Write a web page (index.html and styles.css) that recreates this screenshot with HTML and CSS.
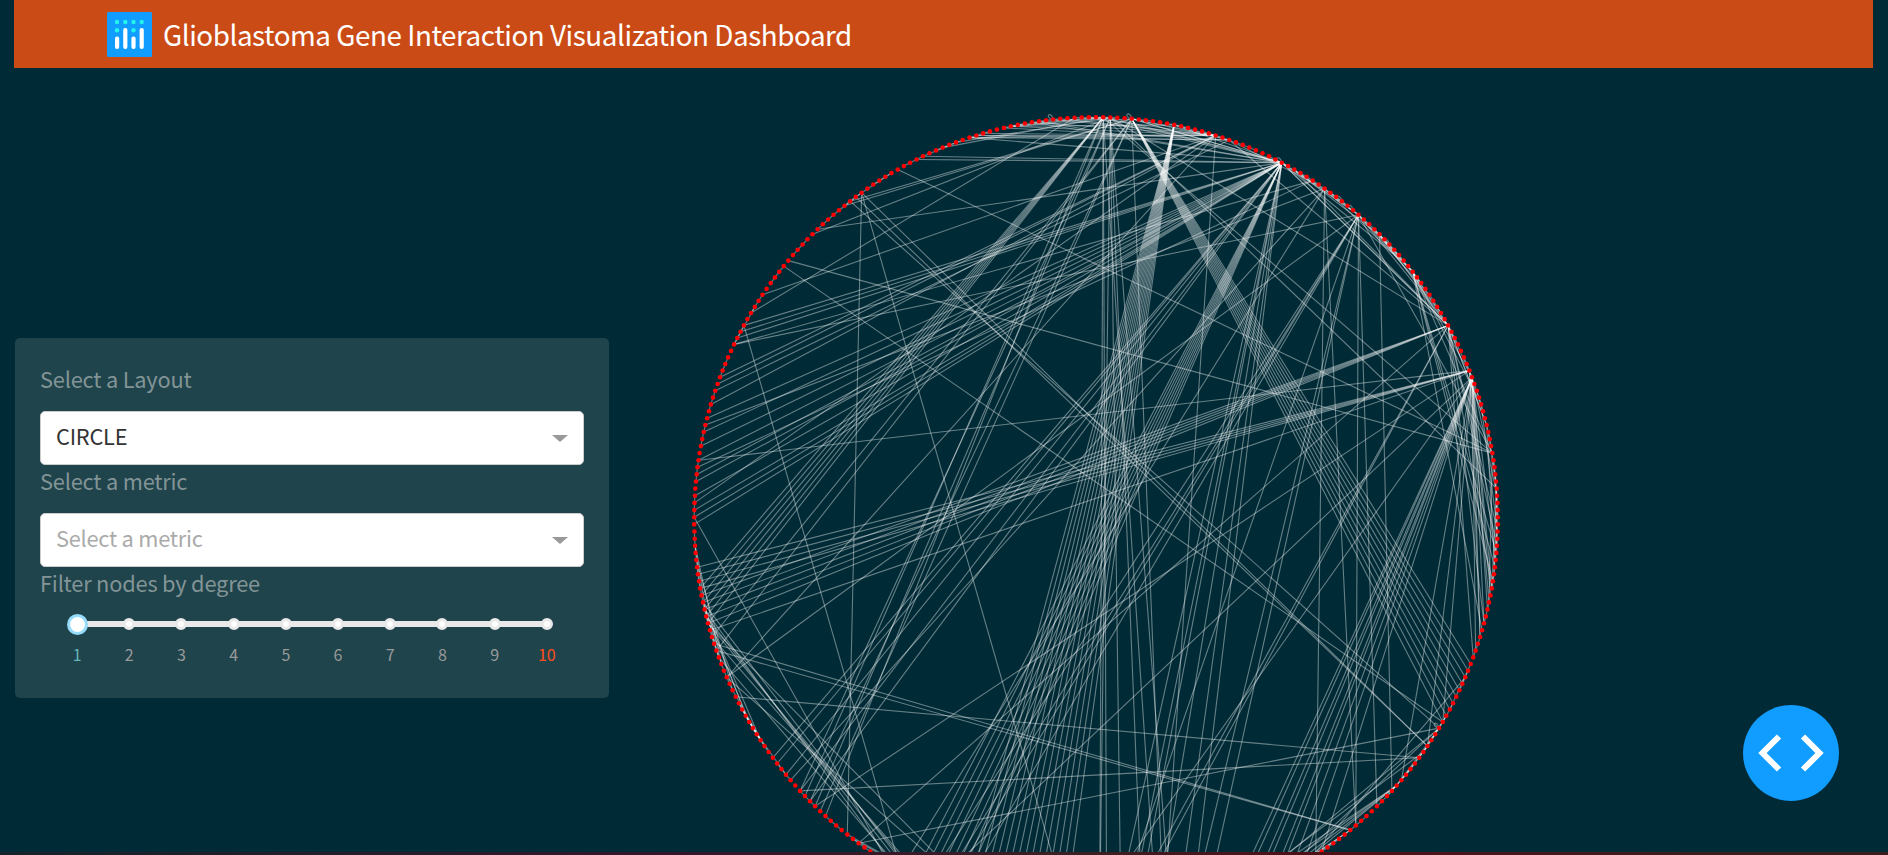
FILE: index.html
```html
<!DOCTYPE html>
<html lang="en">
<head>
<meta charset="utf-8">
<title>Glioblastoma Gene Interaction Visualization Dashboard</title>
<link rel="stylesheet" href="styles.css">
</head>
<body>
<div class="page">
  <header class="navbar">
    <svg class="logo" viewBox="0 0 45 45">
      <rect width="45" height="45" rx="1.5" fill="#119dff"/>
      <g fill="#25f4ee"><circle cx="10" cy="10" r="2.2"/><circle cx="18.3" cy="10" r="2.2"/><circle cx="26.5" cy="10" r="2.2"/><circle cx="34.7" cy="10" r="2.2"/><circle cx="10" cy="18.3" r="2.2"/><circle cx="26.5" cy="18.3" r="2.2"/></g>
      <g fill="#fff"><rect x="8" y="24.5" width="4.2" height="12.5" rx="2"/><rect x="16.2" y="16" width="4.2" height="21" rx="2"/><rect x="24.4" y="24.5" width="4.2" height="12.5" rx="2"/><rect x="32.6" y="16" width="4.2" height="21" rx="2"/></g>
    </svg>
    <h1 class="title">Glioblastoma Gene Interaction Visualization Dashboard</h1>
  </header>
  <main class="content">
    <section class="controls">
      <label class="label">Select a Layout</label>
      <div class="select"><span class="value">CIRCLE</span><i class="arrow"></i></div>
      <label class="label">Select a metric</label>
      <div class="select"><span class="placeholder">Select a metric</span><i class="arrow"></i></div>
      <label class="label label-slider">Filter nodes by degree</label>
      <div class="slider">
        <div class="step active"><i class="dot"></i><span>1</span></div>
        <div class="step"><i class="dot"></i><span>2</span></div>
        <div class="step"><i class="dot"></i><span>3</span></div>
        <div class="step"><i class="dot"></i><span>4</span></div>
        <div class="step"><i class="dot"></i><span>5</span></div>
        <div class="step"><i class="dot"></i><span>6</span></div>
        <div class="step"><i class="dot"></i><span>7</span></div>
        <div class="step"><i class="dot"></i><span>8</span></div>
        <div class="step"><i class="dot"></i><span>9</span></div>
        <div class="step last"><i class="dot"></i><span>10</span></div>
      </div>
    </section>
    <svg class="network" id="network" viewBox="640 68 1234 784"></svg>
  </main>
  <footer class="edge-strip"></footer>
  <button class="code-button" aria-label="Callback graph">
    <svg viewBox="0 0 96 96"><path d="M36 31.5 19.5 48 36 64.5M60 31.5 76.5 48 60 64.5" fill="none" stroke="#fff" stroke-width="6"/></svg>
  </button>
</div>
<script src="graph.js"></script>
</body>
</html>
```
FILE: styles.css
```css
* { box-sizing: border-box; }
body { margin: 0; background: #002b36; font-family: "Noto Sans CJK SC", "Noto Sans", sans-serif; color: #839496; }
.page { height: 855px; display: flex; flex-direction: column; overflow: hidden; }
.navbar { flex: 0 0 68px; margin: 0 15px 0 14px; padding: 0 0 0 93px; background: #cb4b16; display: flex; align-items: center; }
.logo { width: 45px; height: 45px; margin-right: 11px; }
.title { margin: 0; padding-bottom: 1px; font-size: 27.8px; letter-spacing: -0.45px; font-weight: 400; line-height: 40px; color: #fff; white-space: nowrap; }
.content { flex: 1; min-height: 0; display: flex; padding-left: 15px; }
.controls { flex: 0 0 594px; height: 360px; margin-top: 270px; padding: 25px; border-radius: 5px; background: #1f444c; display: flex; flex-direction: column; }
.label { height: 36px; margin-bottom: 12px; font-size: 21.8px; letter-spacing: -0.2px; line-height: 32px; white-space: nowrap; }
.label-slider { margin-bottom: 0; }
.select { flex: 0 0 54px; padding: 0 15px; border: 1px solid #ccc; border-radius: 5px; background: #fff; display: flex; align-items: center; justify-content: space-between; font-size: 21.8px; letter-spacing: -0.25px; line-height: 48px; }
.value, .placeholder { padding-bottom: 4px; }
.value { color: #333; }
.placeholder { color: #aaa; }
.arrow { width: 0; height: 0; border: 8px solid transparent; border-top: 7px solid #999; border-bottom: 0; }
.slider { margin: 9px 11px 0; display: flex; background: linear-gradient(#e9e9e9, #e9e9e9) 26px 9px / 470px 6px no-repeat; }
.step { flex: 0 0 52.2px; display: flex; flex-direction: column; align-items: center; font-size: 16px; line-height: 22px; color: #999; }
.dot { width: 12px; height: 12px; margin: 6px 0 13px; border: 3px solid #e9e9e9; border-radius: 50%; background: #fff; }
.active .dot { width: 21px; height: 21px; margin: 2px 0 8px; border-color: #96dbfa; }
.active { color: #66b5bd; }
.last { color: #ff4d1c; }
.network { width: 1234px; height: 784px; margin-left: 31px; }
.edges { fill: none; stroke: #fff; stroke-opacity: .4; stroke-width: 1.1; }
.nodes { fill: #f00; }
.edge-strip { flex: 0 0 3px; background: linear-gradient(90deg, #16232c, #35142c 35%, #3b2024 57%, #511018 70%, #3b1d1d 90%); }
.code-button { position: absolute; left: 1743px; top: 705px; width: 96px; height: 96px; padding: 0; border: 0; border-radius: 50%; background: #119dff; }
.code-button svg { display: block; width: 96px; height: 96px; }
```
FILE: graph.js
```js
const COUNT = 353, CX = 1096, CY = 519, R = 401.8;
const at = i => {
  const a = i * 2 * Math.PI / COUNT;
  return [CX + R * Math.sin(a), CY - R * Math.cos(a)];
};
const range = (a, b) => Array.from({ length: b - a + 1 }, (_, k) => a + k);

// Each entry: source node and the nodes it interacts with.
const links = [
  [11, range(181, 195)],
  [5, range(109, 118)],
  [27, range(196, 203)],
  [27, [221, 223, 226, 228, 229]],
  [27, [264, 265, 266, 268, 270, 271, 273, 275, 277, 279]],
  [27, [291, 292, 293, 310, 327, 328, 335]],
  [27, [163, 165, 168, 171, 172, 174]],
  [27, [60, 60, 50, 40, 36, 352, 345, 1, 2, 5]],
  [1, range(250, 255)],
  [1, [176, 175, 218, 222, 168, 79, 342]],
  [2, [176, 173, 170, 166, 220, 223, 309, 60, 84]],
  [5, [219, 221, 316, 315, 248, 246, 167, 17, 19, 27]],
  [17, [281, 284, 285, 298, 337, 336, 335, 267, 242, 352, 348, 167]],
  [19, [336, 340, 283, 335, 34, 60]],
  [32, [290, 272]],
  [34, [144, 225, 278, 205, 137, 40, 51]],
  [40, [196, 198, 199, 201, 161, 163, 174, 290, 242, 137, 133, 60, 55, 51]],
  [44, [130, 51, 60]],
  [51, [93, 95, 97, 104, 60, 68]],
  [60, [253, 252, 251, 250, 254, 172, 173, 90, 92, 98, 103, 108, 75, 68, 212]],
  [67, [258, 257, 256, 255, 249, 273, 220, 105, 100]],
  [68, [157, 156, 154, 153, 151, 150, 148, 146, 143, 178, 200]],
  [68, [98, 99, 101, 103, 105, 107, 118, 122, 128, 85, 94]],
  [304, [79]], [303, [118]], [324, [79]],
  [318, [214, 180, 122]], [317, [122]], [316, [119]],
  [293, [205]], [265, [207]],
  [253, [203, 236]], [251, [204, 235]], [250, [202, 192]], [248, [201]],
  [252, [206, 232]], [245, [205]], [242, [192]],
  [247, [138]], [246, [138]], [239, [124]], [223, [124]], [212, [119]],
  [213, [197]], [214, [196]], [261, [244, 250]], [259, [240]],
  [129, [147, 150, 154, 157]], [138, [146, 148, 149]], [119, [150, 156]], [111, [145]], [123, [158, 130]],
  [84, [94, 98, 76]], [79, [40, 51, 100]], [75, [60, 95]], [72, [51, 68, 90]],
  [341, [2, 17, 5, 11]], [344, [17, 1, 27]], [333, [2]], [331, [1]],
  [350, [295]], [347, [17]],
  [43, [53, 49, 58]], [29, [40, 45, 60]], [11, [27, 19]],
  [232, [238, 237, 236, 235, 234]], [233, [237, 236, 235]], [231, [240]], [226, [234]],
  [117, [124, 121]], [118, [123]], [119, [129]], [122, [127]], [126, [131]], [109, [116]],
  [290, [296]], [313, [318]], [318, [323]], [328, [334]], [254, [260, 245]], [243, [249]],
  [88, [97, 80]], [92, [82]]
];

let edges = "";
for (const [from, targets] of links) {
  const [x1, y1] = at(from);
  for (const to of targets) {
    const [x2, y2] = at(to);
    edges += `M${x1.toFixed(1)} ${y1.toFixed(1)}L${x2.toFixed(1)} ${y2.toFixed(1)}|`;
  }
}
for (const i of range(0, COUNT - 1)) {
  if (i % 5 > 2) continue;
  const [x1, y1] = at(i), [x2, y2] = at(i + 1);
  edges += `M${x1.toFixed(1)} ${y1.toFixed(1)}L${x2.toFixed(1)} ${y2.toFixed(1)}|`;
}
// Self interactions.
for (const i of [347, 5, 27, 37, 39, 46, 119]) {
  const [x, y] = at(i);
  edges += `M${x} ${y}C${x - 10} ${y - 2} ${x - 2} ${y - 10} ${x} ${y}|`;
}
const paths = edges.split("|").filter(Boolean).map(d => `<path d="${d}"/>`).join("");
const nodes = range(0, COUNT - 1).map(i => {
  const [x, y] = at(i);
  return `<circle cx="${x.toFixed(1)}" cy="${y.toFixed(1)}" r="2.3"/>`;
}).join("");
document.getElementById("network").innerHTML =
  `<g class="edges">${paths}</g><g class="nodes">${nodes}</g>`;
```
